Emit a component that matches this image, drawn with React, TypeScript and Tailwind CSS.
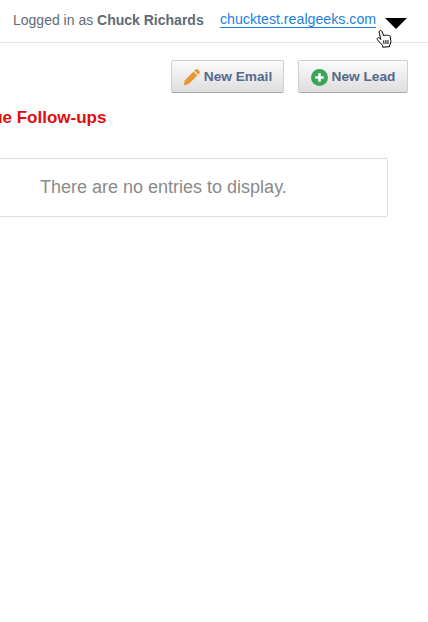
import React from "react";

function Pencil() {
  return (
    <svg width="18" height="18" viewBox="0 0 18 18" className="shrink-0">
      <path d="M12.6 1.6a1.6 1.6 0 0 1 2.2 0l1.6 1.6a1.6 1.6 0 0 1 0 2.2l-1.2 1.2-3.8-3.8z" fill="#e8962e" />
      <path d="M10.6 3.6l3.8 3.8-8.6 8.6-4.6 1.2-.4-.4 1.2-4.6z" fill="#e8962e" />
    </svg>
  );
}

function PlusCircle() {
  return (
    <svg width="17" height="17" viewBox="0 0 16 16" className="shrink-0">
      <circle cx="8" cy="8" r="8" fill="#3aa655" />
      <path d="M8 4v8M4 8h8" stroke="#fff" strokeWidth="2.4" />
    </svg>
  );
}

function Hand() {
  return (
    <svg width="18" height="20" viewBox="0 0 18 20" className="absolute left-[376px] top-[29px]">
      <path
        d="M3.4 2.2c.6-1 2-.9 2.5.2l2 4.6c.2-1 1.5-1.2 2.1-.4.4-.8 1.7-.8 2.2.1.6-.6 1.8-.3 2 .7l.6 4.2c.2 1.7-.2 3.2-1.2 4.5l-.1 1.6-6.7.5-.4-2L1.6 11c-.7-.9-.5-1.8.1-2.2.7-.4 1.5-.1 2.1.6l1 1.2-1.6-6.9c-.1-.6-.1-1.1.2-1.5z"
        fill="#fff"
        stroke="#000"
        strokeWidth="1"
        strokeLinejoin="round"
      />
      <path d="M7.6 11.5l.4 3.5M9.8 11l.2 4M12 11v4" stroke="#000" strokeWidth="1" />
    </svg>
  );
}

export default function App() {
  return (
    <div className="relative h-[622px] w-[428px] overflow-hidden bg-white font-['Liberation_Sans',Arial,sans-serif]">
      <header className="flex h-[43px] items-start border-b border-[#e4e6e8] pl-[13px] pt-[12px]">
        <span className="w-[191px] whitespace-nowrap text-[14px] leading-[16px] text-[#5f6b76]">
          Logged in as <b>Chuck Richards</b>
        </span>
        <a className="ml-[16px] whitespace-nowrap border-b border-[#1f7fe0] text-[14.2px] leading-[15px] text-[#1f7fe0]">
          chucktest.realgeeks.com
        </a>
        <span className="ml-[9px] mt-[6px] h-0 w-0 border-x-[11px] border-t-[11px] border-x-transparent border-t-black" />
      </header>
      <Hand />
      <div className="flex justify-end gap-[14px] pr-[20px] pt-[17px]">
        <button className="flex h-[33px] w-[113px] items-center justify-center gap-[3px] rounded-[2px] border border-[#cfcfcf] border-b-[#a9a9a9] bg-gradient-to-b from-[#fbfbfb] to-[#dedede] pt-[1px] text-[13.7px] font-bold text-[#55698c]">
          <Pencil />
          New Email
        </button>
        <button className="flex h-[33px] w-[110px] items-center justify-center gap-[4px] rounded-[2px] border border-[#cfcfcf] border-b-[#a9a9a9] bg-gradient-to-b from-[#fbfbfb] to-[#dedede] pt-[1px] text-[13.7px] font-bold text-[#55698c]">
          <PlusCircle />
          New Lead
        </button>
      </div>
      <h2 className="ml-[-57px] mt-[15px] whitespace-nowrap text-[17px] font-bold leading-[20px] text-[#e30b0b]">
        Overdue Follow-ups
      </h2>
      <div className="ml-[-10px] mr-[40px] mt-[30px] flex h-[59px] items-center rounded-[2px] border border-[#dcdcdc] pl-[49px] text-[18px] text-[#8a8a8a]">
        There are no entries to display.
      </div>
    </div>
  );
}
